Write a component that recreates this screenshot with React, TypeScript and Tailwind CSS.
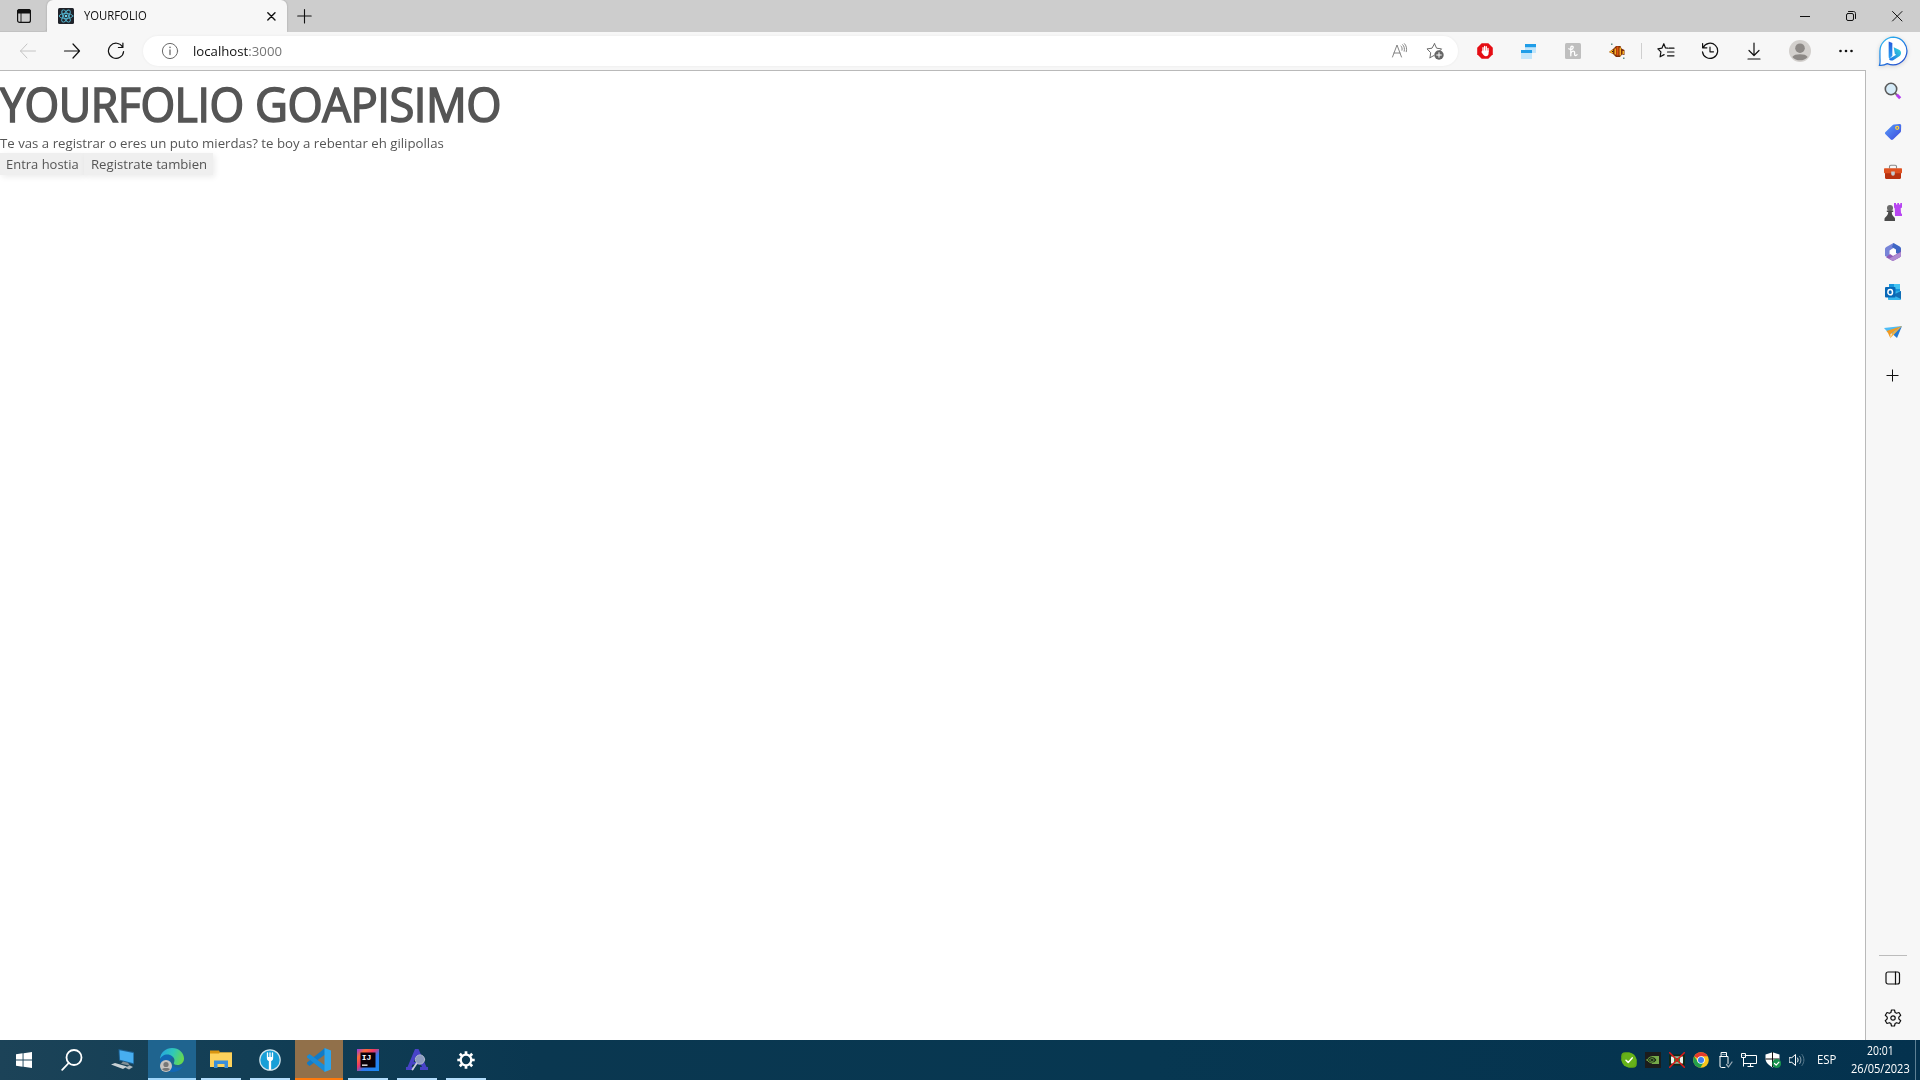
import { useLayoutEffect, useRef, useState, type ReactNode } from "react";

/** Text stretched horizontally to an exact width. */
function Fit({ w, className = "", children }: { w: number; className?: string; children: ReactNode }) {
  const ref = useRef<HTMLSpanElement>(null);
  const [scale, setScale] = useState(1);
  useLayoutEffect(() => {
    if (ref.current && ref.current.offsetWidth) setScale(w / ref.current.offsetWidth);
  }, [w]);
  return (
    <span className={`block whitespace-nowrap ${className}`} style={{ width: w }}>
      <span ref={ref} className="inline-block origin-left" style={{ transform: `scaleX(${scale})` }}>
        {children}
      </span>
    </span>
  );
}

function Svg({ s = 16, vb = 16, children, sw = 1, c = "#111" }: { s?: number; vb?: number; children: ReactNode; sw?: number; c?: string }) {
  return (
    <svg width={s} height={s} viewBox={`0 0 ${vb} ${vb}`} fill="none" stroke={c} strokeWidth={sw} strokeLinecap="round" strokeLinejoin="round" className="block shrink-0">
      {children}
    </svg>
  );
}

function Slot({ className, children }: { className: string; children: ReactNode }) {
  return <div className={`flex shrink-0 items-center justify-center ${className}`}>{children}</div>;
}

function Bing() {
  return (
    <svg width="31" height="31" viewBox="0 0 32 32" className="mb-px block shrink-0 drop-shadow-sm">
      <defs>
        <linearGradient id="ring" x1="0" y1="0" x2="0.7" y2="1">
          <stop offset="0" stopColor="#2fc0f2" />
          <stop offset="0.5" stopColor="#1f86e6" />
          <stop offset="1" stopColor="#2450cf" />
        </linearGradient>
        <linearGradient id="bee" x1="0" y1="0" x2="0" y2="1">
          <stop offset="0" stopColor="#2459dc" />
          <stop offset="1" stopColor="#2aa4f4" />
        </linearGradient>
        <linearGradient id="bee2" x1="1" y1="0" x2="0" y2="1">
          <stop offset="0" stopColor="#35dcd8" />
          <stop offset="1" stopColor="#1b6be8" />
        </linearGradient>
      </defs>
      <path d="M16 1.2a14.3 14.3 0 1 1-6.4 27.3C7.4 29.8 4 30.4 1.5 30.2 2.6 27.6 2 25 2 22V15.500A14.3 14.3 0 0 1 16 1.200z" fill="#fff" stroke="url(#ring)" strokeWidth="1.300" />
      <path d="M11 5.800l3.800 1.400V20.500l-2.800 3c-.7-.5-1-1.200-1-2.200z" fill="url(#bee)" />
      <path d="M16.200 11.500l5.500 2.800c2.600 1.400 2.700 4.700.7 6.300L15.700 25c-1.500.8-3.400.200-4.400-1.300l7.500-4.400-1.400-.8z" fill="url(#bee2)" />
    </svg>
  );
}

function Toolbar() {
  return (
    <div className="flex h-[38px] items-center bg-[#f7f7f7] pl-1.5">
      <Slot className="w-11">
        <Svg s={18} vb={18} c="#c4c4c4"><path d="M16.500 9H1.500M8 2L1.500 9 8 16" /></Svg>
      </Slot>
      <Slot className="w-11">
        <Svg s={18} vb={18} sw={1.200}><path d="M1.500 9h15M10 2l6.500 7L10 16" /></Svg>
      </Slot>
      <Slot className="w-11">
        <Svg s={18} vb={18} sw={1.200}><path d="M15.600 5A7.600 7.600 0 1 0 16.600 9.500M15.900 1v4.500h-4.500" /></Svg>
      </Slot>
      <div className="ml-[5px] flex h-[30px] w-[1315px] shrink-0 items-center rounded-full bg-white shadow-[0_0_3px_rgba(0,0,0,0.06)]">
        <Slot className="ml-[18px] w-[18px]">
          <Svg s={18} vb={18} c="#6b6b6b"><circle cx="9" cy="9" r="7.600" /><path d="M9 8v4.600" strokeWidth="1.300" /><path d="M9 5.300v.2" strokeWidth="1.500" /></Svg>
        </Slot>
        <div className="ml-[14px] font-['Open_Sans',sans-serif] text-[13.500px] leading-[20px] text-[#111]">
          <Fit w={89}>localhost<span className="text-[#767676]">:3000</span></Fit>
        </div>
        <div className="ml-auto flex">
          <Slot className="w-9">
            <Svg s={18} vb={18} c="#777"><path d="M2.500 15L7 3l4.500 12M4 11h6M11 4c.9.800 1.400 2.500 1 4.200M12.700 2.700c1.500 1.400 2.200 4 1.500 6.500M14.500 1.700c1.900 1.900 2.600 5 1.800 8" strokeWidth=".9" /></Svg>
          </Slot>
          <Slot className="mr-[5px] w-9">
            <Svg s={18} vb={18} c="#6b6b6b"><path d="M8.500 1.700l2.100 4.500 5 .7-2 2M4 15.700l.7-5L1 6.900l5-.7 2.500-4.500M4 15.700L8 13.500" /><circle cx="13" cy="13" r="4.700" fill="#666" stroke="none" /><path d="M13 10.700v4.600M10.700 13h4.600" stroke="#fff" /></Svg>
          </Slot>
        </div>
      </div>
      <Slot className="ml-[5px] w-11">
        <Svg><path d="M4.700.2h6.600l4.500 4.500v6.600l-4.500 4.500H4.700L.2 11.300V4.700z" fill="#e50d14" stroke="none" /><path d="M6 7.500V4.700M7.600 7.500V3.400M9.300 7.500V3.700M11 8.500V5.500" stroke="#fff" strokeWidth="1.300" /><path d="M5.300 7.500h6.300v2.700c0 2-1 3-2.700 3-1.700 0-2.500-.9-4.500-4.200z" fill="#fff" stroke="none" /></Svg>
      </Slot>
      <Slot className="w-11">
        <Svg><g stroke="none"><path d="M4 4.300h11V10H4zM0 10h11v6H0z" fill="#c2e5fa" /><path d="M4 1h11v3.300H4zM0 7h11v3H0z" fill="#1f9de8" /></g></Svg>
      </Slot>
      <Slot className="w-11">
        <Svg><rect width="16" height="16" rx="1.500" fill="#bfbfbf" stroke="none" /><path d="M5.800 12.800V4.500c0-1.600 2.400-1.700 2.400 0 0 1-.7 1.700-2.400 2.400M3.800 5.800c1 .7 2 .8 3 .6M5.800 10.500c.8-2.700 3.800-3.200 3.800-.8v1.800c0 1.300 1.600 1.400 2.500.2" stroke="#fff" strokeWidth="1.300" /></Svg>
      </Slot>
      <Slot className="w-11">
        <Svg><g stroke="none"><path d="M0 9l4-3 3-3h4.500l1 2.500L15.500 7v5L13 11.500 11 14H7l-3-3z" fill="#7d2f08" /><path d="M0 9l4-2.500v4zM5.500 5.500h1.500v6H5.500zM10.500 4.500H12v8h-1.500zM13.500 8H15v3h-1.500z" fill="#f4ad25" /><path d="M7.500 3.500H9.500v9h-2z" fill="#e0560f" /><path d="M3 8h1v1H3z" fill="#111" /><path d="M2 .5h1.500V2H2zM14 14.500h1.500V16H14z" fill="#5f8f88" /></g></Svg>
      </Slot>
      <div className="ml-[2px] h-4 w-px bg-[#cfcfcf]" />
      <Slot className="ml-0.5 w-11">
        <Svg s={18} vb={18} sw={1.200}><path d="M10.800 6.200L8.500 6 6.800 1.700 4.900 6.200l-4 .6 3 3.100-.8 4.900 4-2.200M12 6.200h5M10.500 10h6.500M10.500 13.800h6.500" /></Svg>
      </Slot>
      <Slot className="w-11">
        <Svg s={18} vb={18} sw={1.200}><path d="M2.200 5.500A7.600 7.600 0 1 1 1.500 9.800M1.600 1.500v4.300h4.300M9 5.200v4.600h3.500" /></Svg>
      </Slot>
      <Slot className="w-11">
        <Svg s={18} vb={18} sw={1.200}><path d="M9 1v12M4 8.500l5 5 5-5M3 17h12" /></Svg>
      </Slot>
      <Slot className="ml-[1px] w-[46px]">
        <Svg s={22} vb={22}><g stroke="none"><circle cx="11" cy="11" r="11" fill="#d3d0cd" /><circle cx="11" cy="8.200" r="4.800" fill="#8d8986" /><path d="M3.300 17c1.500-2.200 4-2.800 7.700-2.800s6.200.6 7.700 2.800A10.500 10.500 0 0 1 3.300 17z" fill="#8d8986" /></g></Svg>
      </Slot>
      <Slot className="ml-[5px] w-9">
        <Svg><g stroke="none" fill="#111"><circle cx="2.500" cy="8" r="1.300" /><circle cx="8" cy="8" r="1.300" /><circle cx="13.500" cy="8" r="1.300" /></g></Svg>
      </Slot>
    </div>
  );
}

function Sidebar() {
  const slot = "h-10 w-full";
  return (
    <div className="flex w-[54px] flex-col items-center bg-[#f7f7f7]">
      <Slot className="h-[39px] w-full"><Bing /></Slot>
      <Slot className={slot}>
        <Svg s={18} vb={18}><path d="M11 11l2 2" stroke="#777" strokeWidth="2" /><path d="M12.800 12.800l3.400 3.400" stroke="#b63df0" strokeWidth="3" strokeLinecap="butt" /><circle cx="7" cy="7" r="5.700" fill="#d5ebf8" stroke="#5a5a5a" strokeWidth="1.600" /></Svg>
      </Slot>
      <Slot className="mt-[1px] h-10 w-full">
        <Svg s={18} vb={18}><defs><linearGradient id="tag" x1="0" y1="0" x2="1" y2="1"><stop stopColor="#5aa0fa" /><stop offset="1" stopColor="#3b46dc" /></linearGradient></defs><path d="M10 1.500l5.500-.5c1 0 1.700.6 1.700 1.600L17 8c0 .7-.2 1-.7 1.600L9 16.500c-.7.600-1.500.600-2.200 0L1.500 11.300c-.7-.7-.7-1.500 0-2.200L8.500 2.200c.5-.4.900-.7 1.500-.7z" fill="url(#tag)" stroke="none" /><circle cx="13.200" cy="4.800" r="1.500" fill="#4968dd" stroke="#ffd43a" strokeWidth="1.300" /></Svg>
      </Slot>
      <Slot className={slot}>
        <Svg s={18} vb={18}><path d="M5.500 5V3.500c0-.8.600-1.300 1.300-1.300h4.400c.7 0 1.300.5 1.300 1.300V5" stroke="#888" strokeWidth="1.100" /><g stroke="none"><path d="M1 9h16v5.800c0 .7-.5 1.200-1.200 1.200H2.200C1.500 16 1 15.500 1 14.800z" fill="#b83210" /><path d="M1 5.300h16c.6 0 1 .4 1 1v3c0 .6-.4 1-1 1H1c-.6 0-1-.4-1-1v-3c0-.6.400-1 1-1z" fill="#df5120" /><path d="M7.200 8.500h3.600V11a1.800 1.800 0 0 1-3.600 0z" fill="#c5cbcf" /></g></Svg>
      </Slot>
      <Slot className={slot}>
        <Svg s={18} vb={18}><g stroke="none"><path d="M10 0h2v1.500h1.300V0h1.700v1.500h1.300V0H18v4.500l-1.300.8.3 4.700 1 1.200V13h-7l-.2-7.500L10 4.500z" fill="#b845f2" /><circle cx="6" cy="5" r="3" fill="#6a6a6a" /><path d="M2.800 7.600h6.400v1.500H7.800c0 2 .5 3.400 2.200 4.900.8.7 1 1.200 1 2v2H.5v-2c0-.9.400-1.400 1.200-2C3.500 12.500 4.200 11 4.200 9.100H2.800z" fill="#4a4a4a" /></g></Svg>
      </Slot>
      <Slot className={slot}>
        <Svg s={18} vb={18}><g stroke="none"><path d="M9.500 0L2.300 4C1.500 4.500 1 5.300 1 6.200V13l4.500 2V7.500L12.500 3z" fill="#7784d8" /><path d="M9.500 0l6.200 3.600c.8.500 1.300 1.300 1.300 2.200v7L12 10V6.500L8 4z" fill="#3f66c4" /><path d="M17 5.800v6.400c0 .9-.5 1.700-1.300 2.200L10 17.600c-.7.400-1.500.4-2.200 0L2 14.300 6 11l3 2 7.500-4z" fill="#8e5bb8" /><path d="M9 18l7-4c.8-.5 1-1.200 1-2V9L9 13.500 5 15.800z" fill="#b08bd2" /><path d="M9 5.800l2.800 1.600v3.200L9 12.200l-2.800-1.600V7.400z" fill="#fff" /></g></Svg>
      </Slot>
      <Slot className={slot}>
        <Svg s={18} vb={18}><g stroke="none"><path d="M5 1h11v10H5z" fill="#1595dd" /><path d="M10 1h6v5h-6z" fill="#43c3f2" /><path d="M4 9l13-1v8c0 .600-.4 1-1 1H5c-.6 0-1-.4-1-1z" fill="#34b5ed" /><path d="M9 12l8-4v8z" fill="#126db5" /><rect x="1" y="4" width="10.500" height="10.500" rx="1" fill="#0868b7" /></g><ellipse cx="6.200" cy="9.200" rx="2.300" ry="2.600" stroke="#fff" strokeWidth="1.500" /></Svg>
      </Slot>
      <Slot className={slot}>
        <Svg s={18} vb={18}><g stroke="none"><path d="M18 3l-5 12-5-4.500z" fill="#2379d4" /><path d="M0 5L18 3 8 10.500 4.500 10z" fill="#4dbcf5" /><path d="M2.500 8L18 3 6.500 11v4.500L4 10z" fill="#f39a20" /><path d="M18 3L8 10.500 6.500 15l3-3z" fill="#f7b23b" /></g></Svg>
      </Slot>
      <Slot className="mt-1 h-10 w-full"><Svg s={14} vb={14}><path d="M6.500 .5v12M.5 6.500h12" strokeLinecap="butt" /></Svg></Slot>
      <div className="mt-auto h-px w-7 bg-[#bcbcbc]" />
      <Slot className="mt-[2px] h-10 w-full"><Svg s={16} sw={1.200}><rect x="1" y="2" width="13.500" height="12" rx="2" /><path d="M10.500 2v12" /></Svg></Slot>
      <Slot className="mb-[2px] h-10 w-full">
        <Svg s={18} vb={18} sw={1.200}><circle cx="9" cy="9" r="2.200" /><path d="M7.500 1h3l.6 2.500 1.500.8 2.400-.8 1.700 2.800-1.900 1.800v1.800l1.900 1.800-1.700 2.800-2.400-.8-1.500.8-.6 2.500h-3l-.6-2.500-1.500-.8-2.400.8-1.700-2.800 1.900-1.800V8.100L1.300 6.300 3 3.500l2.400.8 1.500-.8z" /></Svg>
      </Slot>
    </div>
  );
}

function Task({ bar = "bg-[#b3ddfb]", gap = "", children }: { bar?: string; gap?: string; children: ReactNode }) {
  return (
    <div className={`flex h-10 w-12 shrink-0 flex-col items-center ${gap}`}>
      <div className="flex h-[38px] w-full items-center justify-center pt-0.5">{children}</div>
      <div className={`h-0.5 w-10 ${bar}`} />
    </div>
  );
}

function Taskbar() {
  return (
    <div className="flex h-10 w-full bg-[linear-gradient(90deg,#1c4358_0%,#123e55_13%,#0a3750_28%,#073751_60%,#04324e_100%)] font-['Open_Sans',sans-serif] text-white">
      <Task bar="bg-transparent"><Svg s={16}><path d="M0 2.300l6.600-1v6.300H0zM7.500 1.200L16 0v7.600H7.500zM0 8.500h6.600v6.300L0 13.800zM7.500 8.500H16V16l-8.500-1.200z" fill="#fff" stroke="none" /></Svg></Task>
      <Task bar="bg-transparent"><Svg s={22} vb={22} c="#fff" sw={1.800}><circle cx="13" cy="8.500" r="7.500" /><path d="M7.700 14L1.200 20.800" /></Svg></Task>
      <Task bar="bg-transparent" gap="ml-[3px]">
        <Svg s={24} vb={24}><g stroke="none"><path d="M7.500 1L23 4v12.500L8 12.500z" fill="#1d5f90" /><path d="M8.500 2.200L22.300 5v10.300L9 11.700z" fill="#47aef0" /><path d="M12 13.500l5 1.300 2 3-9-2z" fill="#7f8d94" /><path d="M0 16.500l4-1.500 12 3.500-4 2.500z" fill="#c9d1d5" /><path d="M14 19.500l5-2 3 1.500-4 2.500z" fill="#aeb8bd" /></g></Svg>
      </Task>
      <div className="ml-px flex h-10 w-12 shrink-0 flex-col bg-[#1f648f]">
        <div className="flex h-[38px] items-center justify-center pt-0.5">
          <svg width="24" height="24" viewBox="0 0 24 24">
            <defs><linearGradient id="edge" x1="0" y1="0.3" x2="1" y2="0.6"><stop stopColor="#26a5e2" /><stop offset=".5" stopColor="#30c8b7" /><stop offset="1" stopColor="#69d94a" /></linearGradient></defs>
            <path d="M0 11C.5 4 6 0 12 0c7 0 12 5 12 10.500 0 4-3 6.500-6.500 6.500-3 0-4.300-1.200-3.500-2.500 1.200-2.500.2-5.500-3-6.500C7 7 3 7.500 0 11z" fill="url(#edge)" />
            <path d="M0 12c1-4.500 6-6.500 10-5 1.500.6 3 2 3 3-2-.5-3 1-2.500 3.500.8 3.500 4 6 7.500 6 2 0 3.500-.4 4.800-1.200C20.500 22.500 16.500 24 12 24 5 24 0 18.500 0 12z" fill="#1267b4" />
            <circle cx="6" cy="18" r="6" fill="#c6c3c0" /><circle cx="6" cy="16.500" r="2.600" fill="#777" /><path d="M2 21c1-1.500 7-1.500 8 0-1.500 2.600-6.500 2.600-8 0z" fill="#777" />
          </svg>
        </div>
        <div className="h-0.5 bg-[#9fd6fb]" />
      </div>
      <Task gap="ml-[1px]">
        <Svg s={22} vb={22}><g stroke="none"><path d="M0 1.500h9l1 2H22V7H0z" fill="#d9950f" /><path d="M0 4.500h9l1-1h12V18H0z" fill="#fdd25c" /><path d="M4 11.500h14V19h-3.500v-4h-7v4H4z" fill="#3a8fdb" /></g></Svg>
      </Task>
      <Task gap="ml-[1px]">
        <Svg s={22} vb={22}><circle cx="11" cy="11" r="10.200" fill="#189fd7" stroke="#d0e4ec" strokeWidth="1.200" /><path d="M8.500 4v5c0 2 1.200 2.500 2.500 2.500s2.500-.5 2.500-2.500V4M11 4v7" stroke="#fff" strokeWidth="1.300" /><path d="M9 8h4v3H9z" fill="#fff" stroke="none" /><path d="M11 11v9" stroke="#fff" strokeWidth="2.300" /></Svg>
      </Task>
      <div className="ml-px flex h-10 w-12 shrink-0 flex-col bg-[#91704a]">
        <div className="flex h-[38px] items-center justify-center pt-0.5">
          <svg width="24" height="24" viewBox="0 0 24 24"><path d="M18 0v6.500L2.500 18 0 16v-1.500z" fill="#127bc6" /><path d="M18 24v-6.500L2.500 6 0 8v1.500z" fill="#1a8bd6" /><path d="M17.500 0L24 2.500v19L17.500 24z" fill="#2ba5ee" /></svg>
        </div>
        <div className="h-0.5 bg-[#ff7a0c]" />
      </div>
      <Task gap="ml-[1px]">
        <svg width="22" height="22" viewBox="0 0 22 22">
          <defs><linearGradient id="ij" x1="0" y1="0" x2="1" y2="1"><stop stopColor="#8e38ea" /><stop offset=".22" stopColor="#fb6b35" /><stop offset=".42" stopColor="#ed3569" /><stop offset=".6" stopColor="#3278ed" /><stop offset="1" stopColor="#168af4" /></linearGradient></defs>
          <rect width="22" height="22" fill="url(#ij)" /><rect x="3.500" y="3.500" width="15" height="15" fill="#0a0008" />
          <text x="4.700" y="11" fontFamily="Liberation Mono, monospace" fontWeight="700" fontSize="8" fill="#fff">IJ</text>
          <rect x="5" y="15.500" width="5.500" height="1.300" fill="#fff" />
        </svg>
      </Task>
      <Task gap="ml-[1px]">
        <Svg s={22} vb={22}><path d="M9 0h3.500l8 18H22v3h-8v-3h2l-1-2.500H6.500L5.500 18h2v3H0v-3h1.500z" fill="#4743c7" stroke="none" /><path d="M10 8l-2.300 5h4.500z" fill="#123e55" stroke="none" /><circle cx="14" cy="10.500" r="4.600" fill="#8d9bc0" stroke="#b0bace" /><path d="M10.500 14.500L6.500 20.500" stroke="#c5cbd7" strokeWidth="1.800" /></Svg>
      </Task>
      <Task gap="ml-[1px]">
        <Svg s={18} vb={18} c="#fff"><circle cx="9" cy="9" r="5.300" strokeWidth="2.300" /><path d="M9 .3v3M9 14.700v3M.3 9h3M14.700 9h3M2.800 2.800L5 5M13 13l2.200 2.200M15.200 2.800L13 5M5 13l-2.200 2.200" strokeWidth="2.700" strokeLinecap="butt" /></Svg>
      </Task>
      <div className="ml-auto flex h-10">
        <Slot className="w-6"><Svg><rect x=".2" y=".2" width="11" height="11" rx="4" fill="#62a915" stroke="none" /><rect x="4.800" y="4.800" width="11" height="11" rx="4" fill="#62a915" stroke="none" /><circle cx="8" cy="8" r="7.300" fill="#66b21a" stroke="none" /><path d="M5 8.200l2.200 2.200 4-4.500" stroke="#fff" strokeWidth="1.500" /></Svg></Slot>
        <Slot className="w-6"><Svg><path d="M0 0h16v16H0z" fill="#1c1c1c" stroke="none" /><path d="M7 4h7v8H7z" fill="#76a94b" stroke="none" /><path d="M2 8c2.500-4.500 7.500-4.500 10 0-2.500 4-7 4-10 0z" fill="#1c2a18" stroke="#79b247" strokeWidth=".9" /><path d="M4.500 8c1.500-2 3.500-2 5 0-1.500 2-3.500 2-5 0z" stroke="#79b247" strokeWidth=".8" /></Svg></Slot>
        <Slot className="w-6"><Svg><path d="M0 2.500h16v11H0z" fill="#102b17" stroke="none" /><path d="M2 4.500h12v7H2z" fill="#e8eee8" stroke="none" /><path d="M5 5.500h6v5H5z" fill="#268b36" stroke="none" /><path d="M.7.700l14.600 14.600M15.300.700L.7 15.300" stroke="#e01717" strokeWidth="1.500" /></Svg></Slot>
        <Slot className="w-6"><Svg><g stroke="none"><circle cx="8" cy="8" r="7.800" fill="#f9c51d" /><path d="M8 8L1.200 4.200A7.800 7.800 0 0 1 14.800 4.200H8z" fill="#e33b2e" /><path d="M1.200 4.200A7.800 7.800 0 0 0 7.400 15.800L10.800 10 5 10z" fill="#22a04b" /><circle cx="8" cy="8" r="3.800" fill="#fff" /><circle cx="8" cy="8" r="3" fill="#3c7df0" /></g></Svg></Slot>
        <Slot className="w-6"><Svg c="#fff"><path d="M4.500.500h5v4h-5zM3 4.500h8v7M3 4.500v9.500c0 .800.500 1.500 1.300 1.500H8M6 2.300v.2M8 2.300v.2" /><path d="M9.500 12.500l2 2.500L15 10" stroke="#9aabb7" strokeWidth="1.300" /></Svg></Slot>
        <Slot className="w-6"><Svg c="#fff"><path d="M5 3.500h10.500v8H3M9.500 11.500v3M6.500 14.500h6M.5 1.500h4v4h-4zM2.500 5.500v9M2 3v.500M3.500 3v.500" strokeLinecap="butt" /></Svg></Slot>
        <Slot className="w-6"><Svg><path d="M7.500.3L14.500 2.500v4c0 4-3 6.500-7 9C3.500 13 .5 10.500.5 6.500v-4z" fill="#fff" stroke="none" /><path d="M7.500 0v15M.5 7h14" stroke="#111" strokeLinecap="butt" /><circle cx="11.700" cy="11.500" r="4.500" fill="#16914e" stroke="none" /><path d="M9.500 11.500l1.700 1.700 2.700-3" stroke="#fff" strokeWidth="1.200" /></Svg></Slot>
        <Slot className="w-6"><Svg c="#fff"><path d="M.5 5.700h2.300L6.500 2.500v11L2.800 10.300H.5zM8.500 6c.8 1.300.8 2.700 0 4" /><path d="M10.700 4.300c1.700 2.300 1.700 5.100 0 7.400" stroke="#8ba2b0" /><path d="M13 2.500c2.600 3.500 2.600 7.500 0 11" stroke="#58798c" /></Svg></Slot>
        <div className="ml-[8px] flex items-center text-[12px]"><Fit w={19}>ESP</Fit></div>
        <div className="ml-[14px] flex w-[60px] flex-col items-center pt-[2px] text-[12px] leading-[18px]">
          <Fit w={27}>20:01</Fit>
          <Fit w={59}>26/05/2023</Fit>
        </div>
        <div className="ml-[5px] h-full w-px bg-[#5d8094]" />
        <div className="w-1" />
      </div>
    </div>
  );
}

export default function App() {
  return (
    <div className="flex h-[1080px] w-[1920px] flex-col overflow-hidden bg-white">
      <div className="flex h-8 shrink-0 bg-[#cdcdcd]">
        <Slot className="h-8 w-[47px] rounded-br-[4px] shadow-[inset_0_-1px_0_#c2c2c2]">
          <Svg sw={1.200}><rect x="1.600" y="1.600" width="12.800" height="12.800" rx="2" /><path d="M1.600 3.500c0-1.200.8-2 2-2h8.800c1.200 0 2 .8 2 2V5H1.600z" fill="#111" /><path d="M5 5v9.400" strokeWidth=".9" /></Svg>
        </Slot>
        <div className="flex h-8 w-[240px] items-center rounded-t-[6px] bg-[#f7f7f7] pl-[11px] pr-[8px] shadow-[0_0_2px_rgba(0,0,0,0.25)]">
          <Svg><rect width="16" height="16" rx="1.500" fill="#20232a" stroke="none" /><g stroke="#53b5d0" strokeWidth=".9"><ellipse cx="8" cy="8" rx="6.800" ry="2.600" /><ellipse cx="8" cy="8" rx="6.800" ry="2.600" transform="rotate(60 8 8)" /><ellipse cx="8" cy="8" rx="6.800" ry="2.600" transform="rotate(120 8 8)" /></g><circle cx="8" cy="8" r="1.300" fill="#6fd3ec" stroke="none" /></Svg>
          <div className="ml-[10px] font-['Open_Sans',sans-serif] text-[12px] leading-4 text-[#111]"><Fit w={63}>YOURFOLIO</Fit></div>
          <div className="ml-auto"><Svg sw={1.400}><path d="M4.800 4.800l7.200 7.200M12 4.800L4.800 12" /></Svg></div>
        </div>
        <Slot className="ml-[1px] h-8 w-8"><Svg s={16} sw={1.100}><path d="M8.500 1.500v13.500M1.700 8h13.500" /></Svg></Slot>
        <div className="ml-auto flex">
          <Slot className="w-[46px]"><Svg s={12} vb={12}><path d="M1 6.500h10" strokeLinecap="butt" /></Svg></Slot>
          <Slot className="w-[46px]"><Svg s={12} vb={12}><rect x="1.500" y="3.500" width="7" height="7" rx="1.500" /><path d="M3.500 1.500h5c1.200 0 2 .8 2 2v5" /></Svg></Slot>
          <Slot className="w-[46px]"><Svg s={12} vb={12}><path d="M1.500 1.500l9.500 9.500M11 1.500L1.500 11" /></Svg></Slot>
        </div>
      </div>
      <div className="flex h-[1008px] shrink-0 bg-[#f7f7f7]">
        <div className="flex w-[1866px] flex-col">
          <Toolbar />
          <main className="flex-1 border-r border-t border-[#b9b9b9] bg-white font-['Open_Sans',sans-serif] text-[#555]">
            <h1 className="pt-[3px] text-[47px] font-normal leading-[60px] tracking-[-0.500px] [-webkit-text-stroke:1.600px_#555]">
              <span className="flex">
                <Fit w={244}>YOURFOLIO</Fit>
                <Fit w={246} className="ml-[11px]">GOAPISIMO</Fit>
              </span>
            </h1>
            <p className="text-[13.500px] leading-[18px]"><Fit w={444}>Te vas a registrar o eres un puto mierdas? te boy a rebentar eh gilipollas</Fit></p>
            <div className="flex pt-px text-[13.500px] leading-[22px]">
              <button className="h-[22px] w-[84px] bg-[#efefef] pl-1.5 text-left shadow-[2px_2px_6px_rgba(0,0,0,0.08)]"><Fit w={73}>Entra hostia</Fit></button>
              <button className="h-[22px] w-[129px] bg-[#efefef] pl-[7px] text-left shadow-[2px_2px_6px_rgba(0,0,0,0.08)]"><Fit w={116}>Registrate tambien</Fit></button>
            </div>
          </main>
        </div>
        <Sidebar />
      </div>
      <Taskbar />
    </div>
  );
}
